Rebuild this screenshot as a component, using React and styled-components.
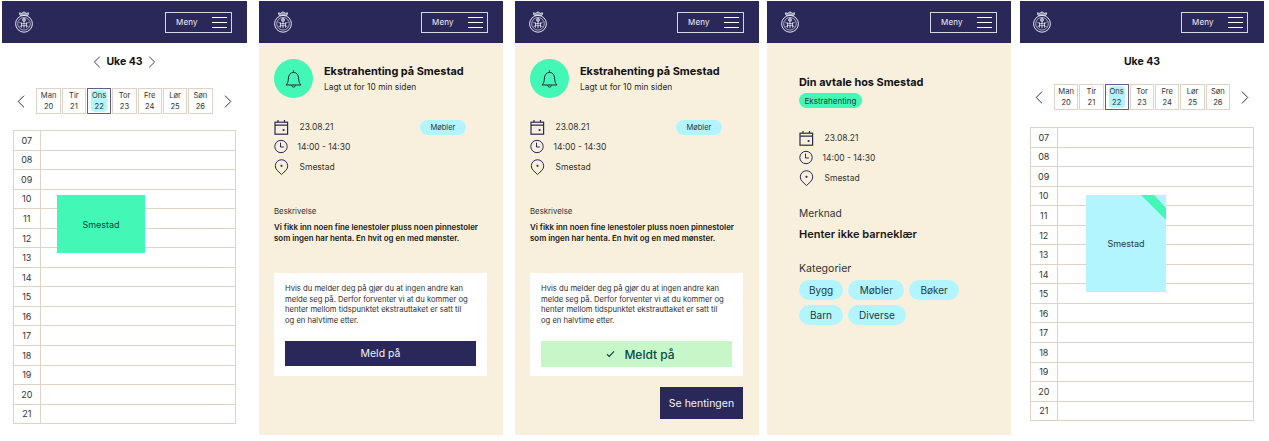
import React from 'react';
import styled, { createGlobalStyle } from 'styled-components';

const Global = createGlobalStyle`
  html, body { margin: 0; padding: 0; background: #fff; }
  body { font-family: Inter, "Noto Sans", "Liberation Sans", sans-serif; color: #1f1f1f; }
  * { box-sizing: border-box; }
`;

const NAVY = '#2a2859';
const SAND = '#f8f0dd';
const LINE = '#e0d2c5';
const MINT = '#43f8b6';
const SKY = '#b3f5ff';

const Canvas = styled.div`
  display: flex;
  align-items: flex-start;
  width: 1269px;
  height: 441px;
  padding: 1px 0 0 2px;
  overflow: hidden;
`;
const Phone = styled.section`
  width: ${p => p.$w}px;
  height: ${p => p.$h}px;
  margin-left: ${p => p.$gap || 0}px;
  background: ${p => (p.$sand ? SAND : '#fff')};
  flex: none;
`;
const Header = styled.header`
  height: 42px;
  background: ${NAVY};
  display: flex;
  align-items: center;
  justify-content: space-between;
  padding: 0 ${p => p.$right || 15}px 0 ${p => p.$left || 13}px;
`;
const MenuButton = styled.div`
  width: 67px;
  height: 21px;
  border: 1px solid #d6d5e3;
  display: flex;
  align-items: center;
  justify-content: space-between;
  padding: 0 4px 0 10px;
  color: #f2f2f7;
  font-size: 8px;
  font-weight: 400;
  letter-spacing: 0.2px;
`;
const Burger = styled.span`
  width: 15px;
  height: 11px;
  border-top: 1px solid #fff;
  border-bottom: 1px solid #fff;
  display: flex;
  align-items: center;
  &::before { content: ''; width: 100%; height: 1px; background: #fff; }
`;

const WeekTitle = styled.div`
  display: flex;
  align-items: center;
  justify-content: center;
  gap: 5px;
  height: 37px;
  font-size: 10.5px;
  font-weight: 700;
  color: #111;
`;
const DaysRow = styled.div`
  display: flex;
  align-items: center;
  justify-content: center;
  gap: 11px;
  margin-top: ${p => p.$mt}px;
`;
const Days = styled.div`
  display: flex;
  gap: 1px;
`;
const Day = styled.div`
  width: 24.3px;
  height: 26px;
  border: 1px solid ${p => (p.$active ? '#5f5c93' : LINE)};
  background: #fff;
  padding: 1px 2px;
  font-size: 7.6px;
  line-height: 11px;
  text-align: center;
  color: #333;
`;
const DayInner = styled.div`
  height: 100%;
  border-radius: 4px;
  background: ${p => (p.$active ? SKY : 'transparent')};
  white-space: nowrap;
  margin: 0 ${p => (p.$active ? 1 : -2)}px;
`;
const Grid = styled.div`
  position: relative;
  width: ${p => p.$w}px;
  margin: ${p => p.$mt}px 0 0 ${p => p.$ml}px;
  border: 1px solid ${LINE};
  border-bottom-width: 0;
`;
const Row = styled.div`
  display: flex;
  height: 19.55px;
  border-bottom: 1px solid ${LINE};
`;
const Hour = styled.div`
  width: 26.5px;
  border-right: 1px solid ${LINE};
  font-size: 9px;
  display: flex;
  align-items: center;
  justify-content: center;
  color: #333;
`;
const EventBlock = styled.div`
  position: absolute;
  left: ${p => p.$l}px;
  top: ${p => p.$t}px;
  width: ${p => p.$w}px;
  height: ${p => p.$h}px;
  background: ${p => p.$bg};
  display: flex;
  align-items: center;
  justify-content: center;
  font-size: 9px;
  color: #1f3b45;
  overflow: hidden;
`;
const Ribbon = styled.span`
  position: absolute;
  right: 0;
  top: 0;
  width: 25px;
  height: 25px;
  background: ${MINT};
  clip-path: polygon(0 0, 13px 0, 100% 13px, 100% 100%);
`;

const Detail = styled.div`
  padding: ${p => p.$pad || '16px 16px 0 15px'};
`;
const Lead = styled.div`
  display: flex;
  align-items: center;
  gap: 11px;
  height: 39px;
`;
const BellCircle = styled.div`
  width: 39px;
  height: 39px;
  border-radius: 50%;
  background: ${MINT};
  display: flex;
  align-items: center;
  justify-content: center;
  flex: none;
`;
const Title = styled.h2`
  margin: 0;
  font-size: 10.9px;
  line-height: 14px;
  font-weight: 700;
  color: #111;
`;
const Sub = styled.p`
  margin: 4px 0 0;
  font-size: 8.4px;
  line-height: 11px;
  color: #2b2b2b;
`;
const Meta = styled.div`
  display: grid;
  grid-template-columns: 25.5px 120px auto;
  grid-template-rows: 18.5px 20.5px 20px;
  align-items: center;
  margin-top: ${p => p.$mt}px;
  font-size: 8.5px;
  color: #333;
`;
const MetaIcon = styled.span`
  display: flex;
  align-items: center;
`;
const TimeText = styled.span`
  margin-left: -2px;
`;
const Pill = styled.span`
  display: inline-flex;
  align-items: center;
  justify-content: center;
  height: ${p => p.$h || 15}px;
  padding: 0 ${p => p.$px || 10}px;
  border-radius: 10px;
  background: ${p => p.$bg || SKY};
  font-size: ${p => p.$fs || 7.5}px;
  color: #1d3a40;
  width: fit-content;
  white-space: nowrap;
`;
const Label = styled.div`
  font-size: ${p => p.$fs || 7.8}px;
  line-height: 11px;
  color: #333;
  margin-top: ${p => p.$mt}px;
`;
const Strong = styled.p`
  margin: ${p => p.$mt || 5}px 0 0;
  font-size: ${p => p.$fs || 7.9}px;
  line-height: ${p => p.$lh || 10.5}px;
  font-weight: 600;
  color: #161616;
`;
const Card = styled.div`
  margin-top: 30px;
  width: 213px;
  height: 103px;
  background: #fff;
  padding: 11px 10px 0 11px;
`;
const CardText = styled.p`
  margin: 0;
  font-size: 7.65px;
  line-height: 10.5px;
  color: #2f2f2f;
  white-space: nowrap;
`;
const Primary = styled.div`
  display: flex;
  align-items: center;
  justify-content: center;
  gap: 9px;
  height: ${p => p.$h || 25}px;
  width: ${p => p.$w || 191}px;
  margin-top: ${p => p.$mt || 15}px;
  padding-left: ${p => p.$pl || 0}px;
  background: ${p => p.$bg || NAVY};
  color: ${p => p.$color || '#f2f2f7'};
  font-size: ${p => p.$fs || 10.5}px;
  font-weight: ${p => p.$weight || 400};
`;
const RightAlign = styled.div`
  width: 213px;
  display: flex;
  justify-content: flex-end;
`;
const PillRow = styled.div`
  display: flex;
  gap: 5px;
  margin-top: ${p => p.$mt}px;
`;

const Logo = () => (
  <svg width="18" height="22" viewBox="0 0 18 22" fill="none" stroke="#e4e4ef" strokeWidth="0.8">
    <path d="M5 4.300 4.400 1.800 6.700 2.300 9 .8 11.300 2.300 13.600 1.800 13 4.300Z" fill="#e4e4ef" fillOpacity="0.55" />
    <circle cx="9" cy="12.800" r="8.400" strokeWidth="1" />
    <circle cx="9" cy="12.800" r="6.300" strokeWidth="0.7" />
    <circle cx="9" cy="8.900" r="1.500" fill="#e4e4ef" fillOpacity="0.6" />
    <path d="M9 10.500v6.800M4.400 10.800c1.300 2.300 3.200 2.200 4.600 1.500 1.400.7 3.300.8 4.600-1.500M4.700 16c1-1.800 2.500-2 4.300-1 1.800-1 3.300-.8 4.300 1M6.500 11.400v5.300M11.500 11.400v5.300" />
  </svg>
);
const Head = ({ left, right }) => (
  <Header $left={left} $right={right}>
    <Logo />
    <MenuButton>Meny<Burger /></MenuButton>
  </Header>
);
const Chevron = ({ dir, w = 8, h = 13 }) => (
  <svg width={w} height={h} viewBox="0 0 8 13" fill="none" stroke={NAVY} strokeWidth="1">
    <path d={dir === 'left' ? 'M7 .7 1.2 6.5 7 12.3' : 'M1 .7 6.8 6.5 1 12.3'} />
  </svg>
);
const CalendarIcon = () => (
  <svg width="15" height="15" viewBox="0 0 15 15" fill="none" stroke={NAVY} strokeWidth="1.2">
    <rect x="1" y="2.200" width="12.600" height="12" />
    <path d="M1 5.200h12.600M4 0v2.200M10.500 0v2.200" />
    <circle cx="9.600" cy="10" r="1.100" fill={NAVY} stroke="none" />
  </svg>
);
const ClockIcon = () => (
  <svg width="15" height="15" viewBox="0 0 15 15" fill="none" stroke={NAVY} strokeWidth="1">
    <circle cx="7" cy="7.500" r="6.200" />
    <path d="M6.500 3.600v4.400h3.400" />
  </svg>
);
const PinIcon = () => (
  <svg width="15" height="17" viewBox="0 0 15 17" fill="none" stroke={NAVY} strokeWidth="1">
    <path d="M7.500 15.600 3 11.200a6.200 6.200 0 1 1 9 0Z" strokeLinejoin="round" />
    <circle cx="7.500" cy="6.800" r="1.100" fill={NAVY} stroke="none" />
  </svg>
);
const BellIcon = () => (
  <svg width="17" height="20" viewBox="0 0 17 20" fill="none" stroke="#15323a" strokeWidth="1">
    <path d="M1 16h15c-2-2-2.200-3.800-2.400-7-.2-3.300-2.200-5.600-5.100-5.600S3.600 5.700 3.400 9C3.200 12.200 3 14 1 16Z" strokeLinejoin="round" />
    <path d="M8.500 1v2.400M6.600 16.200c0 2.500 3.800 2.500 3.800 0" />
  </svg>
);
const Check = () => (
  <svg width="9" height="8" viewBox="0 0 9 8" fill="none" stroke="#0b4a45" strokeWidth="1.200">
    <path d="M1 4.300 3.300 6.500 8 1.300" />
  </svg>
);

const DAYS = [['Man', 20], ['Tir', 21], ['Ons', 22], ['Tor', 23], ['Fre', 24], ['Lør', 25], ['Søn', 26]];
const HOURS = ['07', '08', '09', '10', '11', '12', '13', '14', '15', '16', '17', '18', '19', '20', '21'];

const DayStrip = ({ mt }) => (
  <DaysRow $mt={mt}>
    <Chevron dir="left" />
    <Days>
      {DAYS.map(([n, d]) => (
        <Day key={n} $active={d === 22}>
          <DayInner $active={d === 22}>{n}<br />{d}</DayInner>
        </Day>
      ))}
    </Days>
    <Chevron dir="right" />
  </DaysRow>
);
const HourGrid = ({ w, mt, ml, children }) => (
  <Grid $w={w} $mt={mt} $ml={ml}>
    {HOURS.map(h => (
      <Row key={h}><Hour>{h}</Hour></Row>
    ))}
    {children}
  </Grid>
);
const MetaRows = ({ pill, mt }) => (
  <Meta $mt={mt}>
    <MetaIcon><CalendarIcon /></MetaIcon><span>23.08.21</span>{pill ? <Pill $px={11}>Møbler</Pill> : <span />}
    <MetaIcon><ClockIcon /></MetaIcon><TimeText>14:00 - 14:30</TimeText><span />
    <MetaIcon><PinIcon /></MetaIcon><span>Smestad</span><span />
  </Meta>
);
const Offer = ({ done }) => (
  <Detail>
    <Lead>
      <BellCircle><BellIcon /></BellCircle>
      <div>
        <Title>Ekstrahenting på Smestad</Title>
        <Sub>Lagt ut for 10 min siden</Sub>
      </div>
    </Lead>
    <MetaRows pill mt={20} />
    <Label $mt={29}>Beskrivelse</Label>
    <Strong>Vi fikk inn noen fine lenestoler pluss noen pinnestoler<br />som ingen har henta. En hvit og en med mønster.</Strong>
    <Card>
      <CardText>
        Hvis du melder deg på gjør du at ingen andre kan<br />
        melde seg på. Derfor forventer vi at du kommer og<br />
        henter mellom tidspunktet ekstrauttaket er satt til<br />
        og en halvtime etter.
      </CardText>
      {done
        ? <Primary $bg="#c7f6c9" $color="#0b4a45" $h={26} $fs={12} $weight={500} $pl={8}><Check />Meldt på</Primary>
        : <Primary>Meld på</Primary>}
    </Card>
    {done && (
      <RightAlign>
        <Primary $w={83} $h={32} $mt={11}>Se hentingen</Primary>
      </RightAlign>
    )}
  </Detail>
);

export default function App() {
  return (
    <>
      <Global />
      <Canvas>
        <Phone $w={245} $h={424}>
          <Head />
          <WeekTitle>
            <Chevron dir="left" w={8} h={12} />Uke 43<Chevron dir="right" w={8} h={12} />
          </WeekTitle>
          <DayStrip mt={8} />
          <HourGrid w={223} mt={16} ml={11}>
            <EventBlock $l={43} $t={64} $w={88} $h={58} $bg={MINT}>Smestad</EventBlock>
          </HourGrid>
        </Phone>
        <Phone $sand $w={244} $h={434} $gap={12}>
          <Head right={15} left={15} />
          <Offer />
        </Phone>
        <Phone $sand $w={244} $h={434} $gap={12}>
          <Head right={15} left={14} />
          <Offer done />
        </Phone>
        <Phone $sand $w={244} $h={434} $gap={8}>
          <Head right={14} left={14} />
          <Detail $pad="32px 16px 0 32px">
            <Title>Din avtale hos Smestad</Title>
            <PillRow $mt={4}><Pill $bg={MINT} $px={5.5} $fs={8}>Ekstrahenting</Pill></PillRow>
            <MetaRows mt={21} />
            <Label $mt={20} $fs={10.2}>Merknad</Label>
            <Strong $mt={9} $fs={11} $lh={12}>Henter ikke barneklær</Strong>
            <Label $mt={23} $fs={10.6}>Kategorier</Label>
            <PillRow $mt={6}>
              <Pill $h={19.5} $fs={10}>Bygg</Pill><Pill $h={19.5} $fs={10} $px={11.5}>Møbler</Pill><Pill $h={19.5} $fs={10} $px={11}>Bøker</Pill>
            </PillRow>
            <PillRow $mt={5.5}>
              <Pill $h={19.5} $fs={10} $px={11}>Barn</Pill><Pill $h={19.5} $fs={10} $px={11}>Diverse</Pill>
            </PillRow>
          </Detail>
        </Phone>
        <Phone $w={244} $h={424} $gap={9}>
          <Head right={16} left={13} />
          <WeekTitle>Uke 43</WeekTitle>
          <DayStrip mt={4} />
          <HourGrid w={224} mt={17} ml={10}>
            <EventBlock $l={55} $t={67} $w={80} $h={97} $bg={SKY}>Smestad<Ribbon /></EventBlock>
          </HourGrid>
        </Phone>
      </Canvas>
    </>
  );
}
